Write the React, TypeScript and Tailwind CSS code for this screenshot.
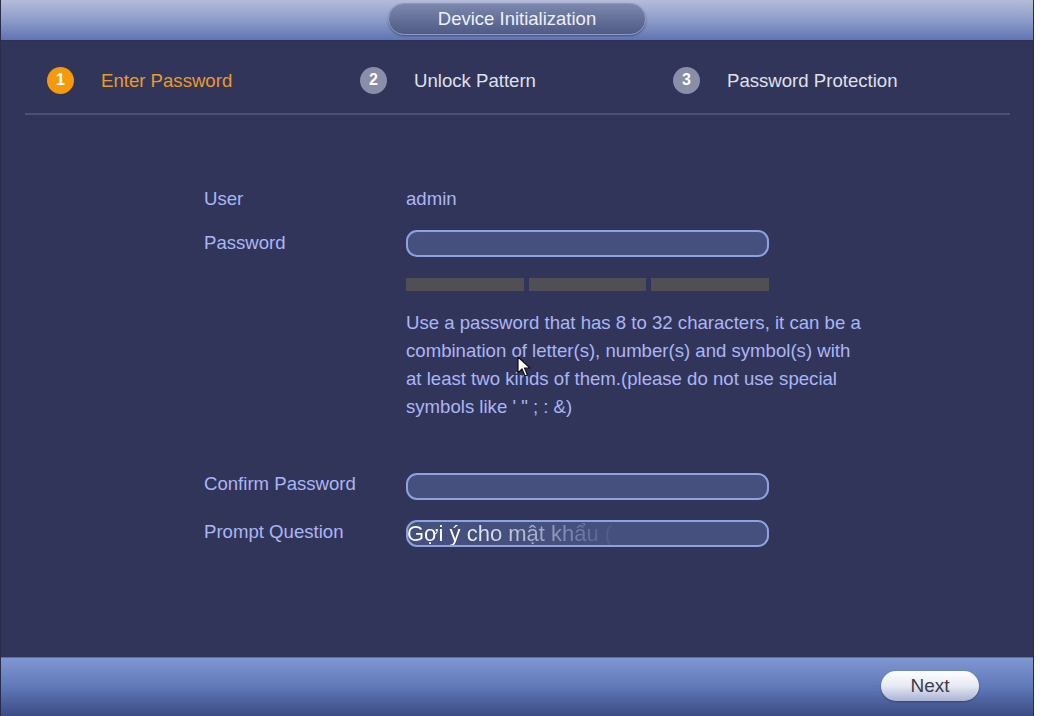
import React from 'react';

const FONT = { fontFamily: '"Liberation Sans", Arial, sans-serif' };

const steps = [
  { n: 1, label: 'Enter Password', active: true },
  { n: 2, label: 'Unlock Pattern', active: false },
  { n: 3, label: 'Password Protection', active: false },
];

const Field: React.FC<{ children?: React.ReactNode }> = ({ children }) => (
  <div className="relative h-[27px] w-[363px] overflow-hidden rounded-[11px] border-2 border-[#8ea2df] bg-[#46507f]">
    {children}
  </div>
);

export default function App() {
  return (
    <div className="flex h-[716px] w-[1040px] bg-white" style={FONT}>
      <div className="relative flex h-full w-[1034px] flex-col border-x border-[#2a2d4a] bg-[#32355a]">
        {/* Title bar */}
        <div className="flex h-[41px] items-start justify-center border-b border-[#2c3358] bg-gradient-to-b from-[#b4bcda] via-[#8e9cc9] to-[#5f74b2] pt-[3px]">
          <div className="flex h-[32px] w-[258px] items-center justify-center rounded-full border border-[#8d97bf] bg-gradient-to-b from-[#7d88ae] to-[#4f5a86] text-[18.5px] text-[#eef0f6] shadow-[0_1px_2px_rgba(0,0,0,0.35)]">
            Device Initialization
          </div>
        </div>

        {/* Steps */}
        <div className="flex h-[72px] items-center pl-[46px] pt-[7px]">
          {steps.map((s) => (
            <div key={s.n} className="flex w-[313px] items-center">
              <div
                className={`flex h-[27px] w-[27px] items-center justify-center rounded-full text-[16px] font-bold text-white ${
                  s.active ? 'bg-[#f59a0c]' : 'bg-[#8a8ea8]'
                }`}
              >
                {s.n}
              </div>
              <span
                className={`ml-[27px] text-[18.6px] ${s.active ? 'text-[#e89a2c]' : 'text-[#dfe0ea]'}`}
              >
                {s.label}
              </span>
            </div>
          ))}
        </div>
        <div className="ml-[24px] mr-[23px] h-[2px] bg-[#4c5078]" />

        {/* Form */}
        <div className="ml-[203px] mt-[70px] grid grid-cols-[202px_363px] text-[18.6px] leading-[28px] text-[#aab6f4]">
          <div>User</div>
          <div>admin</div>

          <div className="mt-[16px]">Password</div>
          <div className="mt-[17px]">
            <Field />
          </div>

          <div />
          <div className="mt-[21px] flex gap-[5px]">
            <div className="h-[13px] flex-1 bg-[#4f4f55]" />
            <div className="h-[13px] flex-1 bg-[#4f4f55]" />
            <div className="h-[13px] flex-1 bg-[#4f4f55]" />
          </div>

          <div />
          <div className="mt-[18px] w-[462px]">
            Use a password that has 8 to 32 characters, it can be a combination of letter(s), number(s) and symbol(s) with at least two kinds of them.(please do not use special symbols like ' " ; : &amp;)
          </div>

          <div className="mt-[49px]">Confirm Password</div>
          <div className="mt-[52px]">
            <Field />
          </div>

          <div className="mt-[18px]">Prompt Question</div>
          <div className="mt-[20px]">
            <Field>
              <span className="absolute left-[-1px] top-[-5px] whitespace-nowrap bg-gradient-to-r from-[#ffffff] from-[25%] via-[#a9afcb] via-[62%] to-[#4f5988] to-[100%] bg-clip-text text-[22px] leading-[34px] text-transparent">
                Gợi ý cho mật khẩu (
              </span>
            </Field>
          </div>
        </div>

        <div className="flex-1" />

        {/* Footer */}
        <div className="flex h-[59px] items-start justify-end border-t border-[#5b6ea8] bg-gradient-to-b from-[#7f98d2] via-[#6078b8] to-[#3a4c84] pr-[54px] pt-[13px]">
          <button className="flex h-[30px] w-[98px] items-center justify-center rounded-full bg-gradient-to-b from-[#ffffff] via-[#e6e9f3] to-[#a9b3d3] text-[19px] text-[#3a3d4a] shadow-[0_1px_2px_rgba(0,0,0,0.3)]">
            Next
          </button>
        </div>

        {/* Mouse cursor */}
        <svg
          className="absolute left-[516px] top-[356px]"
          width="16"
          height="22"
          viewBox="0 0 16 22"
        >
          <path
            d="M1 1 L1 17 L5 13 L8 20 L10.5 19 L7.5 12 L13 12 Z"
            fill="#ffffff"
            stroke="#111111"
            strokeWidth="1.2"
            strokeLinejoin="round"
          />
        </svg>
      </div>
    </div>
  );
}
